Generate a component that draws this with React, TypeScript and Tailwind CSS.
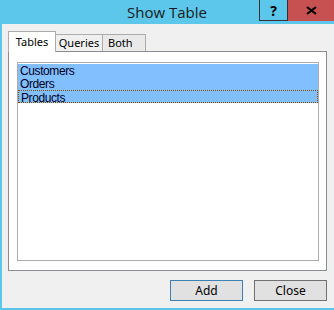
const items = ["Customers", "Orders", "Products"];

export default function App() {
  return (
    <div className="flex h-[310px] w-[334px] flex-col overflow-hidden bg-[#5cc7ea]">
      <div className="relative flex h-[24px] shrink-0 items-center justify-center">
        <span
          className="text-[15px] leading-none text-[#1a1a1a]"
          style={{ fontFamily: '"Open Sans", "Noto Sans", sans-serif' }}
        >
          Show Table
        </span>
        <div className="absolute right-0 top-0 flex h-[21px]">
          <div className="flex w-[29px] items-center justify-center border-b border-l border-r border-[#333] text-[14px] font-bold text-black">
            ?
          </div>
          <div className="flex w-[46px] items-center justify-center bg-[#c75050] pb-[1px]">
            <svg width="11" height="9" viewBox="0 0 11 9">
              <path d="M1 1 L10 8 M10 1 L1 8" stroke="#000" strokeWidth="2.2" />
            </svg>
          </div>
        </div>
      </div>

      <div
        className="mb-[2px] ml-[2px] flex flex-1 flex-col bg-[#f0f0f0] pl-[6px] pr-[7px] pt-[8px]"
        style={{ fontFamily: '"Noto Sans", "Open Sans", sans-serif' }}
      >
        <div className="flex h-[19px] items-end">
          <div className="relative z-10 -mb-px flex h-[21px] w-[48px] items-start justify-center border border-b-0 border-[#acacac] bg-white pt-[2px] text-[11px] text-black">
            Tables
          </div>
          <div className="flex h-[17px] w-[47px] items-center justify-center border border-b-0 border-l-0 border-[#acacac] bg-[#f0f0f0] text-[11px] text-black">
            Queries
          </div>
          <div className="flex h-[17px] w-[43px] items-center border border-b-0 border-l-0 border-[#acacac] bg-[#e9e9e9] pl-[5px] text-[11px] text-black">
            Both
          </div>
        </div>

        <div className="flex h-[220px] flex-col border border-[#898c95] bg-white pb-[9px] pl-[8px] pr-[7px] pt-[10px]">
          <div className="flex-1 border border-[#acacac] bg-white pt-px">
            {items.map((name, i) => (
              <div
                key={name}
                className={
                  "h-[13px] bg-[#82bfff] pl-[2px] text-[12px] leading-[14px] tracking-[-0.4px] text-[#000022] " +
                  (i === 2 ? "border border-dotted border-[#8a4a00] pl-[1px] leading-[12px]" : "")
                }
                style={{ fontFamily: '"Liberation Sans", Arial, sans-serif' }}
              >
                {name}
              </div>
            ))}
          </div>
        </div>

        <div className="flex justify-end gap-[11px] pt-[9px]">
          <button className="h-[21px] w-[73px] border border-[#3c7fb1] bg-[#e1e1e1] text-[12px] text-black">
            Add
          </button>
          <button className="h-[21px] w-[73px] border border-[#707070] bg-[#e1e1e1] text-[12px] text-black">
            Close
          </button>
        </div>
      </div>
    </div>
  );
}
